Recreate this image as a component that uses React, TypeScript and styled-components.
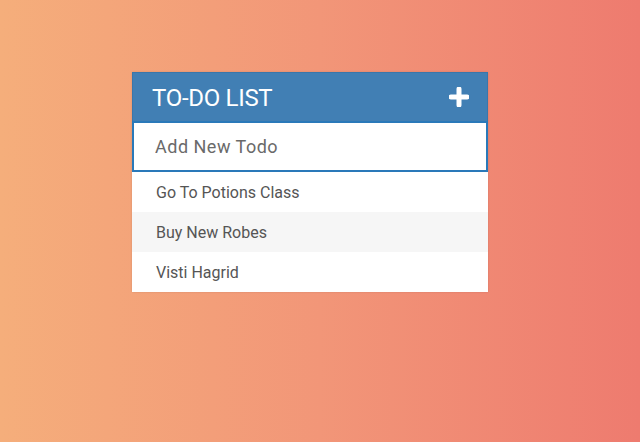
import React from "react";
import styled, { createGlobalStyle } from "styled-components";

const Global = createGlobalStyle`
  html, body { margin: 0; padding: 0; height: 100%; }
  body {
    font-family: Roboto, "Liberation Sans", Arial, sans-serif;
    background: linear-gradient(to right, #f5ae7b 0%, #f29678 50%, #ee7b6f 100%);
    min-height: 442px;
  }
`;

const Page = styled.div`
  display: flex;
  justify-content: center;
  padding-top: 72px;
  padding-right: 20px;
`;

const Card = styled.div`
  width: 356px;
  background: #fff;
  box-shadow: 0 0 2px rgba(0, 0, 0, 0.12);
`;

const Header = styled.div`
  height: 49px;
  background: #417fb4;
  border: 1px solid #3a76aa;
  border-bottom: none;
  box-sizing: border-box;
  display: flex;
  align-items: center;
  justify-content: space-between;
  padding: 0 18px 0 19px;
`;

const Title = styled.h1`
  margin: 0;
  color: #fff;
  font-size: 24px;
  font-weight: 400;
  letter-spacing: -0.3px;
  padding-top: 1px;
`;

const AddButton = styled.button`
  border: none;
  background: none;
  padding: 0;
  display: flex;
  cursor: pointer;
`;

const Input = styled.input`
  display: block;
  width: 100%;
  box-sizing: border-box;
  height: 51px;
  margin: 0;
  border: 2px solid #2a79b9;
  padding: 0 0 0 21px;
  font-family: Roboto, "Liberation Sans", Arial, sans-serif;
  font-size: 18px;
  letter-spacing: 0.5px;
  color: #555;
  outline: none;
  caret-color: #2a79b9;
  &::placeholder { color: #6a6a6a; }
`;

const List = styled.ul`
  list-style: none;
  margin: 0;
  padding: 0;
`;

const Item = styled.li<{ $alt?: boolean }>`
  height: 40px;
  display: flex;
  align-items: center;
  padding-left: 24px;
  font-size: 16px;
  color: #555;
  background: ${(p) => (p.$alt ? "#f6f6f6" : "#fff")};
`;

const todos = ["Go To Potions Class", "Buy New Robes", "Visti Hagrid"];

export default function App() {
  return (
    <>
      <Global />
      <Page>
        <Card>
          <Header>
            <Title>TO-DO LIST</Title>
            <AddButton aria-label="add">
              <svg width="20" height="20" viewBox="0 0 20 20">
                <path d="M10 2v16M2 10h16" stroke="#fff" strokeWidth="5" strokeLinecap="round" />
              </svg>
            </AddButton>
          </Header>
          <Input placeholder="Add New Todo" autoFocus />
          <List>
            {todos.map((t, i) => (
              <Item key={t} $alt={i % 2 === 1}>
                {t}
              </Item>
            ))}
          </List>
        </Card>
      </Page>
    </>
  );
}
